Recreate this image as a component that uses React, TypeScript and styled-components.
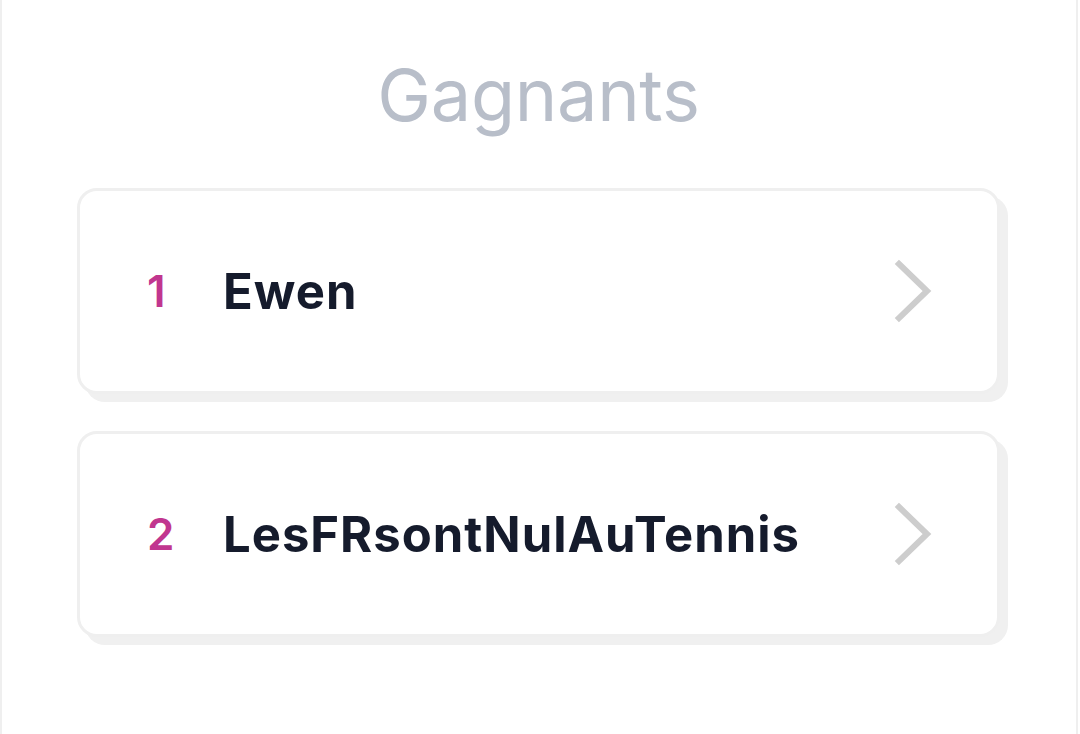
import styled, { createGlobalStyle } from "styled-components";

const GlobalStyle = createGlobalStyle`
  html, body {
    margin: 0;
    padding: 0;
    background: #ffffff;
  }
  body {
    font-family: Inter, "Noto Sans", "Liberation Sans", sans-serif;
  }
`;

const Panel = styled.div`
  box-sizing: border-box;
  width: 1078px;
  height: 734px;
  border-left: 2px solid #efefef;
  border-right: 2px solid #efefef;
  padding: 52px 76px 0 75px;
  display: flex;
  flex-direction: column;
  align-items: stretch;
`;

const Title = styled.h1`
  margin: 0 0 50px;
  text-align: center;
  font-size: 72px;
  font-weight: 400;
  line-height: 86px;
  color: #b8bec9;
  letter-spacing: -0.3px;
`;

const List = styled.ul`
  list-style: none;
  margin: 0;
  padding: 0;
  display: flex;
  flex-direction: column;
  gap: 37px;
`;

const Card = styled.li`
  box-sizing: border-box;
  height: 206px;
  width: 923px;
  border: 3px solid #efefef;
  border-radius: 20px;
  box-shadow: 8px 8px 0 #f0f0f0;
  background: #ffffff;
  display: grid;
  grid-template-columns: 78px 1fr auto;
  align-items: center;
  padding: 0 63px 0 67px;
`;

const Rank = styled.span`
  font-size: 44px;
  font-weight: 600;
  color: #c1368f;
`;

const Name = styled.span`
  font-size: 49px;
  font-weight: 700;
  color: #151b2c;
  letter-spacing: 1px;
  margin-left: -2px;
`;

const Chevron = () => (
  <svg width="40" height="64" viewBox="0 0 40 64" fill="none">
    <polyline
      points="5,5 33,32 5,59"
      stroke="#cdcdcd"
      strokeWidth="6"
      strokeLinecap="square"
      strokeLinejoin="miter"
    />
  </svg>
);

const winners = ["Ewen", "LesFRsontNulAuTennis"];

export default function App() {
  return (
    <>
      <GlobalStyle />
      <Panel>
        <Title>Gagnants</Title>
        <List>
          {winners.map((name, i) => (
            <Card key={name}>
              <Rank>{i + 1}</Rank>
              <Name>{name}</Name>
              <Chevron />
            </Card>
          ))}
        </List>
      </Panel>
    </>
  );
}
